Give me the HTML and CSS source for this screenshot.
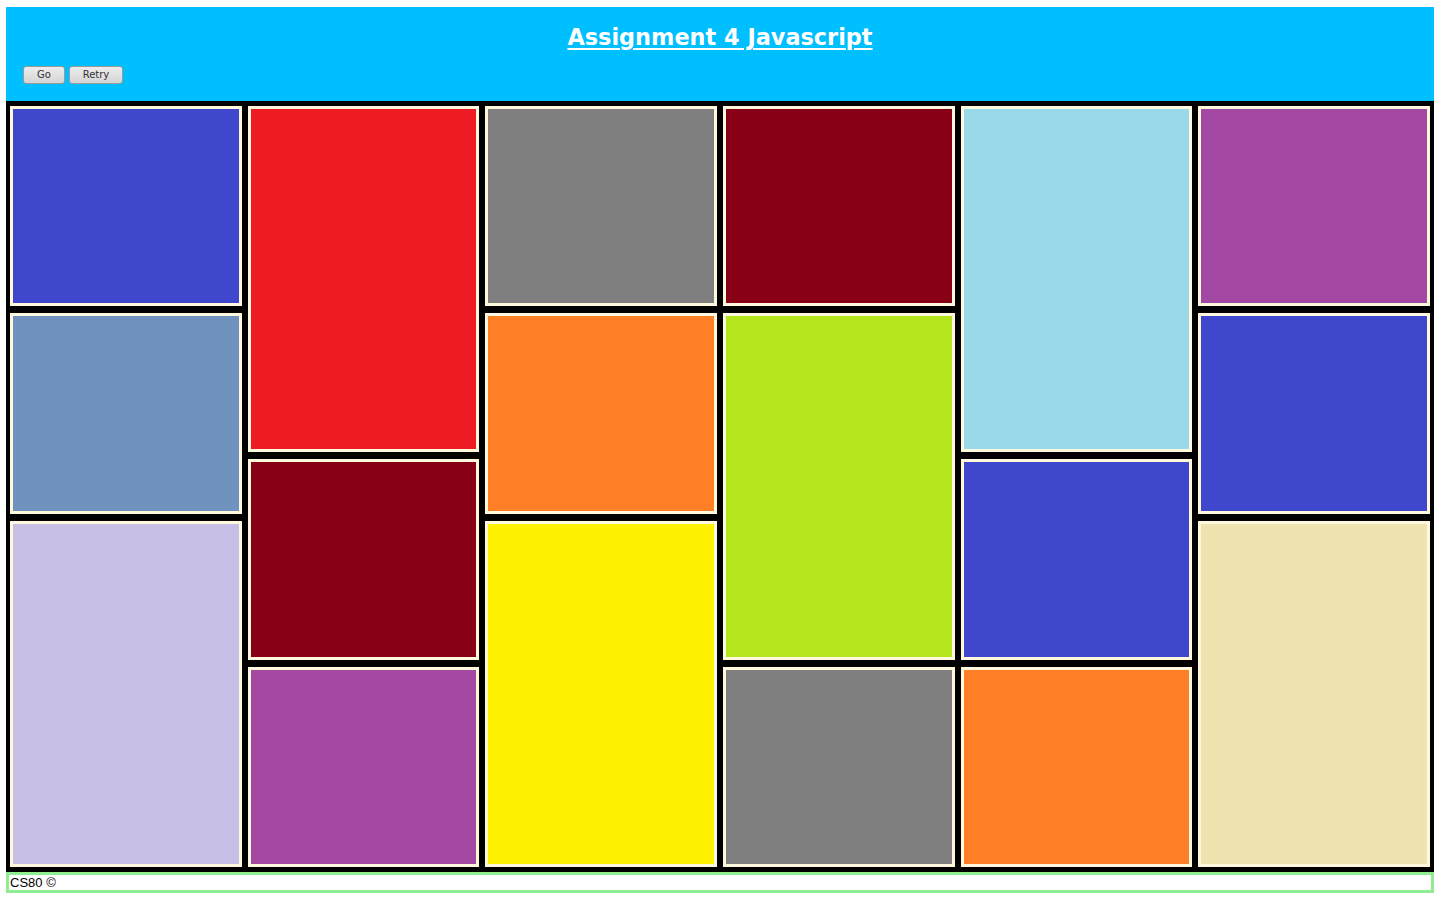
FILE: index.html
```html
<!DOCTYPE html>
<html>
<head>
<meta charset="utf-8">
<title>Assignment 4 Javascript</title>
<link rel="stylesheet" href="styles.css">
</head>
<body>
<header class="top">
  <h1 class="title">Assignment 4 Javascript</h1>
  <div class="controls">
    <button class="btn btn-go">Go</button>
    <button class="btn btn-retry">Retry</button>
  </div>
</header>
<main class="board">
  <div class="col">
    <div class="tile short blue"></div>
    <div class="tile short steel"></div>
    <div class="tile tall lavender"></div>
  </div>
  <div class="col">
    <div class="tile tall red"></div>
    <div class="tile short darkred"></div>
    <div class="tile short purple"></div>
  </div>
  <div class="col">
    <div class="tile short gray"></div>
    <div class="tile short orange"></div>
    <div class="tile tall yellow"></div>
  </div>
  <div class="col">
    <div class="tile short darkred"></div>
    <div class="tile tall lime"></div>
    <div class="tile short gray"></div>
  </div>
  <div class="col">
    <div class="tile tall lightblue"></div>
    <div class="tile short blue"></div>
    <div class="tile short orange"></div>
  </div>
  <div class="col">
    <div class="tile short purple"></div>
    <div class="tile short blue"></div>
    <div class="tile tall beige"></div>
  </div>
</main>
<footer class="foot">CS80 &copy;</footer>
</body>
</html>
```

FILE: styles.css
```css
html, body {
  background: #ffffff;
}
body {
  margin: 7px 6px 4px 6px;
  font-family: "DejaVu Sans", sans-serif;
}
.top {
  background: #00bfff;
  height: 94px;
  box-sizing: border-box;
  padding: 17px 17px 0 17px;
}
.title {
  margin: 0;
  text-align: center;
  color: #ffffff;
  font-family: "DejaVu Sans", sans-serif;
  font-weight: bold;
  font-size: 22.4px;
  line-height: 26px;
  text-decoration: underline;
  text-decoration-thickness: 2px;
  text-underline-offset: 3px;
}
.controls {
  display: flex;
  gap: 4px;
  margin-top: 16px;
}
.btn {
  font-family: "DejaVu Sans", sans-serif;
  font-size: 10px;
  color: #333333;
  height: 18px;
  padding: 0;
  border: 1px solid #9a9a9a;
  border-radius: 3px;
  background: linear-gradient(#ededed, #d4d4d4);
  line-height: 16px;
}
.btn-go { width: 42px; }
.btn-retry { width: 54px; }
.board {
  background: #000000;
  height: 771px;
  box-sizing: border-box;
  padding: 5px 4px 5px 4px;
  display: grid;
  grid-template-columns: repeat(6, 1fr);
  column-gap: 6px;
}
.col {
  display: flex;
  flex-direction: column;
  gap: 7px;
  min-height: 0;
}
.tile {
  border: 3px solid #fff8dc;
  min-height: 0;
}
.short { flex: 2 1 0; }
.tall { flex: 3.5 1 0; }
.blue { background: #3f48cc; }
.steel { background: #7092be; }
.lavender { background: #c8bfe7; }
.red { background: #ed1c24; }
.darkred { background: #880015; }
.purple { background: #a349a4; }
.gray { background: #7f7f7f; }
.orange { background: #ff7f27; }
.yellow { background: #fff200; }
.lime { background: #b5e61d; }
.lightblue { background: #99d9ea; }
.beige { background: #efe4b0; }
.foot {
  border: 3px solid #90ee90;
  height: 15px;
  box-sizing: content-box;
  padding: 0 1px;
  font-family: "Liberation Sans", Arial, sans-serif;
  font-size: 13px;
  line-height: 15px;
  color: #000000;
}
```
